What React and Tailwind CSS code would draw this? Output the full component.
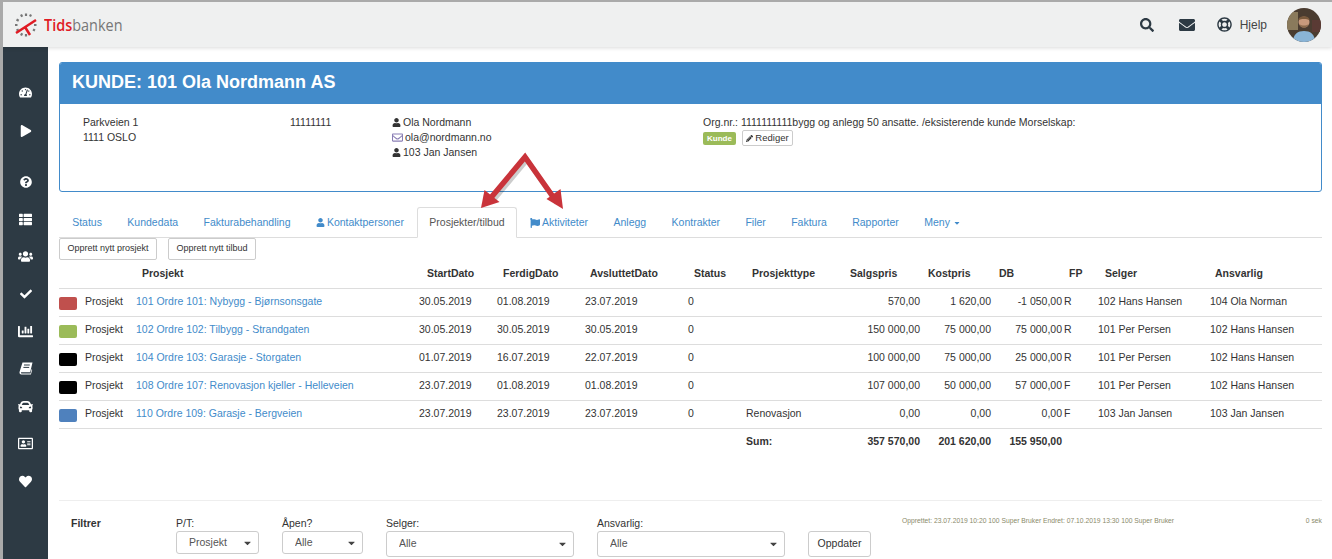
import { FaSearch, FaEnvelope, FaRegLifeRing, FaTachometerAlt, FaPlay, FaQuestionCircle, FaThList, FaUsers, FaCheck, FaChartBar, FaCar, FaRegAddressCard, FaHeart, FaUser, FaRegEnvelope, FaPencilAlt, FaFlag, FaCaretDown } from 'react-icons/fa';

const rows = [
  { color: 'bg-[#c0504d]', name: '101 Ordre 101: Nybygg - Bjørnsonsgate', start: '30.05.2019', end: '01.08.2019', closed: '23.07.2019', type: '', sale: '570,00', cost: '1 620,00', db: '-1 050,00', fp: 'R', seller: '102 Hans Hansen', owner: '104 Ola Norman' },
  { color: 'bg-[#9bbb59]', name: '102 Ordre 102: Tilbygg - Strandgaten', start: '30.05.2019', end: '30.05.2019', closed: '30.05.2019', type: '', sale: '150 000,00', cost: '75 000,00', db: '75 000,00', fp: 'R', seller: '101 Per Persen', owner: '102 Hans Hansen' },
  { color: 'bg-black', name: '104 Ordre 103: Garasje - Storgaten', start: '01.07.2019', end: '16.07.2019', closed: '22.07.2019', type: '', sale: '100 000,00', cost: '75 000,00', db: '25 000,00', fp: 'R', seller: '101 Per Persen', owner: '102 Hans Hansen' },
  { color: 'bg-black', name: '108 Ordre 107: Renovasjon kjeller - Helleveien', start: '23.07.2019', end: '01.08.2019', closed: '01.08.2019', type: '', sale: '107 000,00', cost: '50 000,00', db: '57 000,00', fp: 'F', seller: '101 Per Persen', owner: '102 Hans Hansen' },
  { color: 'bg-[#4f81bd]', name: '110 Ordre 109: Garasje - Bergveien', start: '23.07.2019', end: '23.07.2019', closed: '23.07.2019', type: 'Renovasjon', sale: '0,00', cost: '0,00', db: '0,00', fp: 'F', seller: '103 Jan Jansen', owner: '103 Jan Jansen' },
];

const tabs = ['Status', 'Kundedata', 'Fakturabehandling', 'Kontaktpersoner', 'Prosjekter/tilbud', 'Aktiviteter', 'Anlegg', 'Kontrakter', 'Filer', 'Faktura', 'Rapporter', 'Meny'];

const BookIcon = () => (
  <svg width="14" height="13" viewBox="0 0 14 13" fill="#fff">
    <path d="M3.5 0.5H13.5L11.2 10.2H2.6C2 10.2 1.8 10.8 2.2 11.2C2.4 11.4 2.6 11.4 3 11.4H11.5L12.8 6.8L13.2 8L11.9 12.6H2.4C1 12.6 0.2 11.4 0.6 9.8Z" />
    <path d="M5 3H10.8M4.400 5.400H10.200" stroke="#2d3a44" strokeWidth="1" />
  </svg>
);

const sideIcons = [
  { icon: <FaTachometerAlt size={13} />, top: 'mt-[38px]' },
  { icon: <FaPlay size={12} />, top: 'mt-[23px]' },
  { icon: <FaQuestionCircle size={12} />, top: 'mt-[36.500px]' },
  { icon: <FaThList size={13} />, top: 'mt-[22.400px]' },
  { icon: <FaUsers size={15} />, top: 'mt-[22.400px]' },
  { icon: <FaCheck size={12} />, top: 'mt-[22.400px]' },
  { icon: <FaChartBar size={15} />, top: 'mt-[22.400px]' },
  { icon: <BookIcon />, top: 'mt-[22.400px]' },
  { icon: <FaCar size={15} />, top: 'mt-[22.400px]' },
  { icon: <FaRegAddressCard size={15} />, top: 'mt-[22.400px]' },
  { icon: <FaHeart size={13} />, top: 'mt-[22.400px]' },
];

const Logo = () => (
  <svg width="26" height="26" viewBox="0 0 26 26">
    <g stroke="#777" strokeWidth="2.200">
      <path d="M12 1.500v2.500M7 2.500l1.200 2.200M17 2.500l-1 2M2.500 7.500l2.200 1.200M1 13h2.500M2.500 18.500l2.200-1M7 23.500l1.200-2.200M12 24.500v-2.500M21 18.500l-2-1M22.500 13H20" />
    </g>
    <path d="M2 21L22 8M11 15L16 23" stroke="#e01b24" strokeWidth="2.500" fill="none" />
  </svg>
);

const Avatar = () => (
  <svg width="34" height="34" viewBox="0 0 34 34" className="rounded-full">
    <rect width="34" height="34" fill="#4a3c30" />
    <rect x="0" y="4" width="11" height="18" fill="#8a7a5c" />
    <rect x="25" y="12" width="9" height="12" fill="#5a3a34" />
    <path d="M6 34C6 26 11 23 17 23C23 23 28 26 28 34Z" fill="#8ab4d6" />
    <circle cx="17" cy="14" r="5.500" fill="#c89a7c" />
    <path d="M11.500 12C11.500 7 22.500 7 22.500 12C20 10.500 14 10.500 11.500 12Z" fill="#7a5a3c" />
    <path d="M12.500 16C14 21 20 21 21.500 16C19.500 18 14.500 18 12.500 16Z" fill="#8a6a4c" />
  </svg>
);

const Select = ({ value, w, h }) => (
  <div className={`relative ${w} ${h}`}>
    <select defaultValue={value} className="appearance-none w-full h-full border border-[#ccc] rounded-[3px] bg-white pl-[12px] text-[#555]">
      <option>{value}</option>
    </select>
    <FaCaretDown size={11} className="absolute right-[6px] top-1/2 -translate-y-1/2 text-[#444]" />
  </div>
);

export default function App() {
  return (
    <div className="w-[1332px] h-[559px] overflow-hidden bg-white flex flex-col border-t-2 border-l-[3px] border-[#aaa] text-[10.500px] text-[#333] font-['Liberation_Sans',Arial,sans-serif]">
      <header className="h-[45px] shrink-0 bg-[#eff0f0] shadow-[0_1px_4px_rgba(0,0,0,0.15)] z-10 flex items-center pl-[11px] pr-[11px]">
        <Logo />
        <div className="ml-[4px] text-[17px] leading-none font-['Open_Sans',sans-serif] scale-x-[.85] origin-left">
          <span className="text-[#e01b24] font-semibold">Tids</span>
          <span className="text-[#777]">banken</span>
        </div>
        <div className="ml-auto flex items-center text-[#2d3a44]">
          <FaSearch size={14} />
          <FaEnvelope size={16} className="ml-[25px]" />
          <FaRegLifeRing size={15} className="ml-[22px]" />
          <span className="ml-[8px] text-[12px] text-[#444]">Hjelp</span>
          <div className="ml-[20px]">
            <Avatar />
          </div>
        </div>
      </header>

      <div className="flex flex-1 min-h-0">
        <nav className="w-[45px] shrink-0 bg-[#2d3a44] flex flex-col items-center text-white">
          {sideIcons.map((item, i) => (
            <div key={i} className={`h-[15px] flex items-center justify-center ${item.top}`}>
              {item.icon}
            </div>
          ))}
        </nav>

        <main className="relative flex-1 min-w-0 pl-[11px] pr-[10px] pt-[15px]">
          <section className="h-[130px] border border-[#428bca] rounded-[3px] overflow-hidden">
            <h1 className="h-[41px] bg-[#428bca] pl-[12px] text-[18px] leading-[38px] font-bold text-white">KUNDE: 101 Ola Nordmann AS</h1>
            <div className="flex pt-[11px] leading-[15px]">
              <div className="w-[230px] pl-[23px] shrink-0">
                <div>Parkveien 1</div>
                <div>1111 OSLO</div>
              </div>
              <div className="w-[102px] shrink-0">11111111</div>
              <div className="w-[311px] shrink-0">
                <div className="flex items-center gap-[2px]"><FaUser size={9} className="text-[#333]" />Ola Nordmann</div>
                <div className="flex items-center gap-[2px]"><FaRegEnvelope size={11} className="text-[#8a7fb5]" />ola@nordmann.no</div>
                <div className="flex items-center gap-[2px]"><FaUser size={9} className="text-[#333]" />103 Jan Jansen</div>
              </div>
              <div>
                <div>Org.nr.: 1111111111bygg og anlegg 50 ansatte. /eksisterende kunde Morselskap:</div>
                <div className="flex items-center">
                  <span className="h-[13px] w-[33px] rounded-[2px] bg-[#9bbb59] text-white text-[8px] font-bold leading-[13px] text-center">Kunde</span>
                  <button className="ml-[6px] h-[16px] w-[51px] flex items-center justify-center gap-[2px] border border-[#ccc] rounded-[2px] text-[9.500px] leading-none"><FaPencilAlt size={7} />Rediger</button>
                </div>
              </div>
            </div>
          </section>

          <ul className="flex h-[31px] mt-[15px] pl-[0.500px] border-b border-[#ddd] text-[#428bca]">
            {tabs.map((t) => {
              const active = t === 'Prosjekter/tilbud';
              return (
                <li key={t} className={`h-[31px] px-[11.700px] flex items-center gap-[2px] border ${active ? 'bg-white border-[#ddd] border-b-white rounded-t-[3px] text-[#555]' : 'border-transparent'}`}>
                  {t === 'Kontaktpersoner' && <FaUser size={9} />}
                  {t === 'Aktiviteter' && <FaFlag size={10} />}
                  {t}
                  {t === 'Meny' && <FaCaretDown size={8} className="ml-[1px]" />}
                </li>
              );
            })}
          </ul>

          <div className="flex gap-[11px]">
            <button className="h-[22px] w-[98px] border border-[#ccc] rounded-[2px] text-[9px]">Opprett nytt prosjekt</button>
            <button className="h-[22px] w-[88px] border border-[#ccc] rounded-[2px] text-[9px]">Opprett nytt tilbud</button>
          </div>

          <table className="table-fixed w-[1263px] border-collapse">
            <colgroup>
              <col className="w-[26px]" /><col className="w-[51px]" /><col className="w-[283px]" /><col className="w-[78px]" /><col className="w-[88px]" /><col className="w-[103px]" /><col className="w-[58px]" /><col className="w-[94px]" /><col className="w-[80px]" /><col className="w-[71px]" /><col className="w-[71px]" /><col className="w-[36px]" /><col className="w-[112px]" /><col className="w-[112px]" />
            </colgroup>
            <thead>
              <tr className="h-[28px] border-b border-[#ddd] text-left">
                <th /><th />
                <th className="pl-[6px] font-bold">Prosjekt</th>
                <th className="pl-[8px] font-bold">StartDato</th>
                <th className="pl-[6px] font-bold">FerdigDato</th>
                <th className="pl-[5px] font-bold">AvsluttetDato</th>
                <th className="pl-[6px] font-bold">Status</th>
                <th className="pl-[6px] font-bold">Prosjekttype</th>
                <th className="pl-[10px] font-bold">Salgspris</th>
                <th className="pl-[8px] font-bold">Kostpris</th>
                <th className="pl-[8px] font-bold">DB</th>
                <th className="pl-[7px] font-bold">FP</th>
                <th className="pl-[7px] font-bold">Selger</th>
                <th className="pl-[5px] font-bold">Ansvarlig</th>
              </tr>
            </thead>
            <tbody>
              {rows.map((r) => (
                <tr key={r.name} className="h-[28px] border-b border-[#ddd]">
                  <td><div className={`w-[18px] h-[13px] mt-[3px] rounded-[2px] ${r.color}`} /></td>
                  <td>Prosjekt</td>
                  <td className="text-[#428bca]">{r.name}</td>
                  <td>{r.start}</td>
                  <td>{r.end}</td>
                  <td>{r.closed}</td>
                  <td>0</td>
                  <td>{r.type}</td>
                  <td className="text-right">{r.sale}</td>
                  <td className="text-right">{r.cost}</td>
                  <td className="text-right">{r.db}</td>
                  <td className="pl-[2px]">{r.fp}</td>
                  <td>{r.seller}</td>
                  <td>{r.owner}</td>
                </tr>
              ))}
              <tr className="h-[27px] font-bold">
                <td colSpan={7} />
                <td>Sum:</td>
                <td className="text-right">357 570,00</td>
                <td className="text-right">201 620,00</td>
                <td className="text-right">155 950,00</td>
                <td colSpan={3} />
              </tr>
            </tbody>
          </table>

          <div className="mt-[45px] border-t border-[#eee] flex pt-[15px] relative">
            <div className="w-[117px] pl-[12px] font-bold">Filtrer</div>
            <div className="w-[106px]">
              <div className="leading-[15px]">P/T:</div>
              <Select value="Prosjekt" w="w-[83px]" h="h-[23px]" />
            </div>
            <div className="w-[104px]">
              <div className="leading-[15px]">Åpen?</div>
              <Select value="Alle" w="w-[81px]" h="h-[23px]" />
            </div>
            <div className="w-[211px]">
              <div className="leading-[15px]">Selger:</div>
              <Select value="Alle" w="w-[188px]" h="h-[26px]" />
            </div>
            <div className="w-[211px]">
              <div className="leading-[15px]">Ansvarlig:</div>
              <Select value="Alle" w="w-[188px]" h="h-[26px]" />
            </div>
            <button className="mt-[15px] h-[26px] w-[63px] border border-[#ccc] rounded-[3px]">Oppdater</button>
            <div className="ml-[31px] text-[6.750px] leading-[10px] text-[#8a8a6a]">Opprettet: 23.07.2019 10:20 100 Super Bruker Endret: 07.10.2019 13:30 100 Super Bruker</div>
            <div className="ml-auto text-[6.750px] leading-[10px] text-[#8a8a6a]">0 sek</div>
          </div>

          <svg className="absolute left-[-48px] top-[-47px] pointer-events-none" width="700" height="260" viewBox="0 0 700 260">
            <g fill="none" stroke="#000" strokeOpacity="0.2" strokeWidth="5" transform="translate(2 3)">
              <path d="M490 199L525 157L555 200" />
            </g>
            <path d="M489 200L525 157L556 201" fill="none" stroke="#c9333a" strokeWidth="5.500" />
            <path d="M481 208L484.500 190L499.500 202Z" fill="#c9333a" />
            <path d="M563 209L546.500 199L560.500 189Z" fill="#c9333a" />
          </svg>
        </main>
      </div>
    </div>
  );
}
